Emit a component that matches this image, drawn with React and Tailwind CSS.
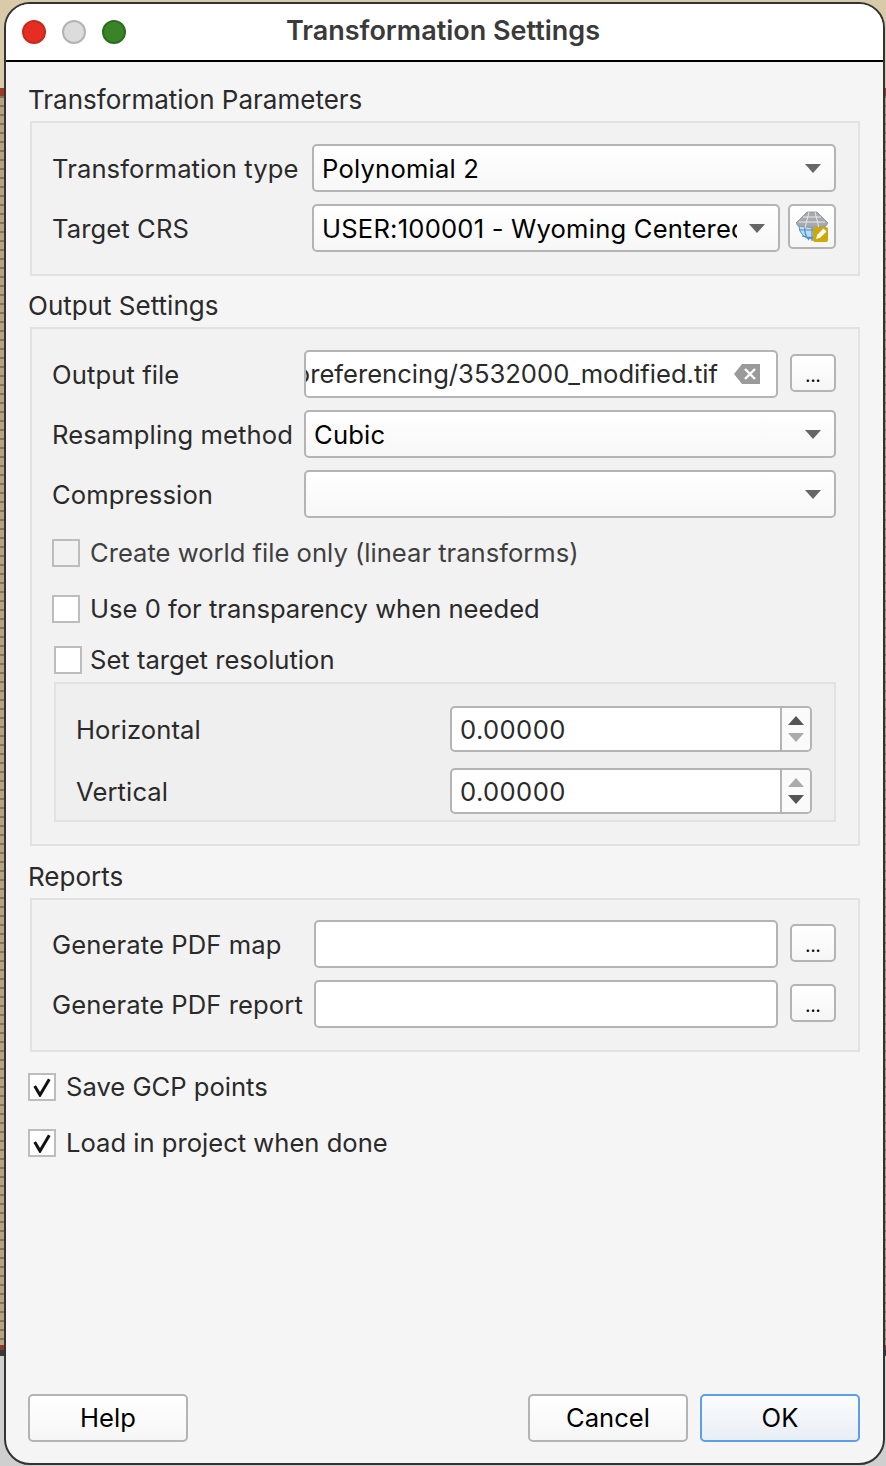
import React from "react";

const Caret = ({ className = "" }) => (
  <svg width="16" height="9" viewBox="0 0 16 9" className={"shrink-0 " + className}>
    <path d="M0 0h16L8 9z" fill="#666" />
  </svg>
);

const Combo = ({ value, className = "", clip = false }) => (
  <div className={"flex h-[48px] items-center justify-between rounded-[5px] border-2 border-[#b4b4b4] bg-gradient-to-b from-white to-[#f7f7f7] pl-[8px] pr-[13px] tracking-[0.2px] text-black " + className}>
    <span className={"pt-[2px] " + (clip ? "w-[415px] overflow-hidden whitespace-nowrap" : "")}>{value}</span>
    <Caret />
  </div>
);

const Label = ({ width, children }) => (
  <span className={"-ml-[1px] flex items-center pt-[2px] tracking-[0.1px] text-[#2a2a2a] " + width}>{children}</span>
);

const SmallBtn = ({ className = "" }) => (
  <div className={"mb-[2px] flex h-[38px] w-[46px] shrink-0 items-end justify-center rounded-[5px] border-2 border-[#b4b4b4] bg-gradient-to-b from-white to-[#f6f6f6] pb-[6px] text-[17px] leading-[15px] font-medium text-black " + className}>
    ...
  </div>
);

const Check = ({ label, checked, dim, className = "", box = "bg-white" }) => (
  <div className={"flex items-center " + className}>
    <div className={"flex h-[28px] w-[28px] shrink-0 items-center justify-center border-2 border-[#bdbdbd] " + box}>
      {checked && (
        <svg width="20" height="20" viewBox="0 0 20 20">
          <path d="M2.7 9 8 18 17.3 2.3" fill="none" stroke="#111" strokeWidth="3" />
        </svg>
      )}
    </div>
    <span className={"ml-[10px] " + (dim ? "text-[#3f3f3f]" : "text-[#2a2a2a]")}>{label}</span>
  </div>
);

const Spin = ({ value, upDark }) => (
  <div className="flex h-[46px] w-[362px] overflow-hidden rounded-[5px] border-2 border-[#b4b4b4] bg-white tracking-[0.4px] text-[#2a2a2a]">
    <div className="flex flex-1 items-center border-r-2 border-[#b4b4b4] pl-[8px] pt-[2px]">{value}</div>
    <div className="flex w-[28px] flex-col items-center justify-center gap-[8px] bg-[#fafafa]">
      <svg width="16" height="9" viewBox="0 0 16 9"><path d="M8 0l8 9H0z" fill={upDark ? "#555" : "#aaa"} /></svg>
      <svg width="16" height="9" viewBox="0 0 16 9"><path d="M0 0h16L8 9z" fill={upDark ? "#aaa" : "#555"} /></svg>
    </div>
  </div>
);

const Group = ({ title, className = "", children }) => (
  <div className={className}>
    <div className="h-[39px] text-[26px] leading-[36px] text-[#2a2a2a]">{title}</div>
    <div className="ml-[2px] border-2 border-[#e2e2e2] bg-[#f2f2f2] pl-[21px] pr-[22px]">{children}</div>
  </div>
);

const FooterBtn = ({ label, primary }) => (
  <div className={"flex h-[48px] w-[160px] items-center justify-center rounded-[5px] border-2 text-black " + (primary ? "border-[#5a9fe8] bg-gradient-to-b from-[#fbfcfe] to-[#e9eef5]" : "border-[#b4b4b4] bg-gradient-to-b from-white to-[#f6f6f6]")}>
    {label}
  </div>
);

export default function App() {
  return (
    <div className="h-[1466px] w-[886px] overflow-hidden bg-[repeating-linear-gradient(to_bottom,rgba(60,50,30,0.4)_0,rgba(60,50,30,0.4)_2px,transparent_2px,transparent_9px),linear-gradient(to_bottom,#d9cba9_0,#d9cba9_88px,#9b3a2a_88px,#9b3a2a_96px,#b5a484_96px,#b5a484_1345px,#8a3a28_1345px,#8a3a28_1350px,#3a3a3a_1350px,#3a3a3a_1356px,#cfcfcf_1356px)] bg-no-repeat [background-position:0_96px,0_0] [background-size:100%_1249px,100%_100%] pl-[4px] pt-[2px] font-['Inter','Liberation_Sans',sans-serif] text-[25.6px] leading-[32px]">
      <div className="flex h-[1463px] w-[881px] flex-col overflow-hidden rounded-[26px] border-2 border-[#333] bg-[#f5f5f5]">
        {/* title bar */}
        <div className="relative flex h-[58px] shrink-0 items-center border-b-2 border-black bg-white pl-[16px]">
          <div className="flex gap-[16px]">
            <div className="h-[24px] w-[24px] rounded-full border-2 border-[#c9281d] bg-[#e32e21]" />
            <div className="h-[24px] w-[24px] rounded-full border-2 border-[#b3b3b3] bg-[#dcdcdc]" />
            <div className="h-[24px] w-[24px] rounded-full border-2 border-[#2b6d1c] bg-[#3a8428]" />
          </div>
          <div className="absolute left-0 right-[3px] top-[11px] text-center text-[27px] font-semibold text-[#3a3a3a]">Transformation Settings</div>
        </div>

        <div className="flex flex-1 flex-col pl-[22px] pr-[23px]">
          <Group title="Transformation Parameters" className="mt-[20px]">
            <div className="pb-[22px] pt-[21px]">
              <div className="flex items-center">
                <Label width="w-[260px]">Transformation type</Label>
                <Combo value="Polynomial 2" className="flex-1" />
              </div>
              <div className="mt-[12px] flex">
                <Label width="w-[260px]">Target CRS</Label>
                <Combo value="USER:100001 - Wyoming Centered" clip className="w-[468px]" />
                <div className="ml-[8px] flex h-[45px] w-[48px] items-center justify-center rounded-[5px] border-2 border-[#b4b4b4] bg-gradient-to-b from-white to-[#f6f6f6]">
                  <svg width="33" height="31" viewBox="0 0 33 31">
                    <circle cx="16" cy="15" r="13" fill="#bcd9f2" stroke="#5a93c9" strokeWidth="1" />
                    <path d="M3 19h26M16 14v16M6 25q10 3 20 0M9 14c-1 7 1 12 4 15M23 14c1 7-1 12-4 15" fill="none" stroke="#4f8fd0" strokeWidth="1.2" />
                    <path d="M0 12 11 1h10l11 11-2 3q-14 3-28 0z" fill="#a6aaaf" stroke="#8a8e93" strokeWidth="0.8" />
                    <path d="M13 1 9 17M19 1l4 16M7 6h18M3 11h26" fill="none" stroke="#e9e9e9" strokeWidth="1" />
                    <rect x="17" y="16" width="15" height="15" rx="2" fill="#cfa707" />
                    <path d="M20 28l1.500-4.500 6-6 3 3-6 6z" fill="#fff" />
                  </svg>
                </div>
              </div>
            </div>
          </Group>

          <Group title="Output Settings" className="mt-[12px]">
            <div className="pb-[22px] pt-[21px]">
              <div className="flex items-center">
                <Label width="w-[252px]">Output file</Label>
                <div className="flex h-[48px] w-[474px] items-center overflow-hidden rounded-[5px] border-2 border-[#b4b4b4] bg-white pr-[16px] text-[#2a2a2a]">
                  <div className="flex h-full w-[412px] items-center justify-end overflow-hidden whitespace-nowrap">
                    <span>Georeferencing/3532000_modified.tif</span>
                  </div>
                  <svg width="26" height="20" viewBox="0 0 26 20" className="ml-[16px] shrink-0">
                    <path d="M8 0h18v20H8L0 10z" fill="#9a9a9a" />
                    <path d="M11 5l10 10M21 5 11 15" stroke="#fff" strokeWidth="2.4" />
                  </svg>
                </div>
                <SmallBtn className="ml-[12px]" />
              </div>
              <div className="mt-[12px] flex items-center">
                <Label width="w-[252px]">Resampling method</Label>
                <Combo value="Cubic" className="flex-1" />
              </div>
              <div className="mt-[12px] flex items-center">
                <Label width="w-[252px]">Compression</Label>
                <Combo value="" className="flex-1" />
              </div>
              <Check label="Create world file only (linear transforms)" dim box="bg-[#f2f2f2]" className="-ml-[1px] mt-[19px] [&>span]:ml-[10px]" />
              <Check label="Use 0 for transparency when needed" className="-ml-[1px] mt-[24px] [&>span]:ml-[10px]" />
              <Check label="Set target resolution" className="ml-[1px] mt-[19px] [&>span]:ml-[8px]" />
              <div className="ml-[1px] mt-[6px] border-2 border-[#e2e2e2] bg-[#efefef] pb-[6px] pl-[21px] pr-[22px] pt-[22px]">
                <div className="flex items-center justify-between">
                  <Label width="">Horizontal</Label>
                  <Spin value="0.00000" upDark />
                </div>
                <div className="mt-[16px] flex items-center justify-between">
                  <Label width="">Vertical</Label>
                  <Spin value="0.00000" />
                </div>
              </div>
            </div>
          </Group>

          <Group title="Reports" className="mt-[13px]">
            <div className="pb-[22px] pt-[20px]">
              <div className="flex items-center">
                <Label width="w-[262px]">Generate PDF map</Label>
                <div className="h-[48px] w-[464px] rounded-[5px] border-2 border-[#b4b4b4] bg-white" />
                <SmallBtn className="ml-[12px]" />
              </div>
              <div className="mt-[12px] flex items-center">
                <Label width="w-[262px]">Generate PDF report</Label>
                <div className="h-[48px] w-[464px] rounded-[5px] border-2 border-[#b4b4b4] bg-white" />
                <SmallBtn className="ml-[12px]" />
              </div>
            </div>
          </Group>

          <Check label="Save GCP points" checked className="mt-[19px]" />
          <Check label="Load in project when done" checked className="mt-[24px]" />

          <div className="mb-[21px] mt-auto flex items-center">
            <FooterBtn label="Help" />
            <div className="ml-auto flex gap-[12px]">
              <FooterBtn label="Cancel" />
              <FooterBtn label="OK" primary />
            </div>
          </div>
        </div>
      </div>
    </div>
  );
}
